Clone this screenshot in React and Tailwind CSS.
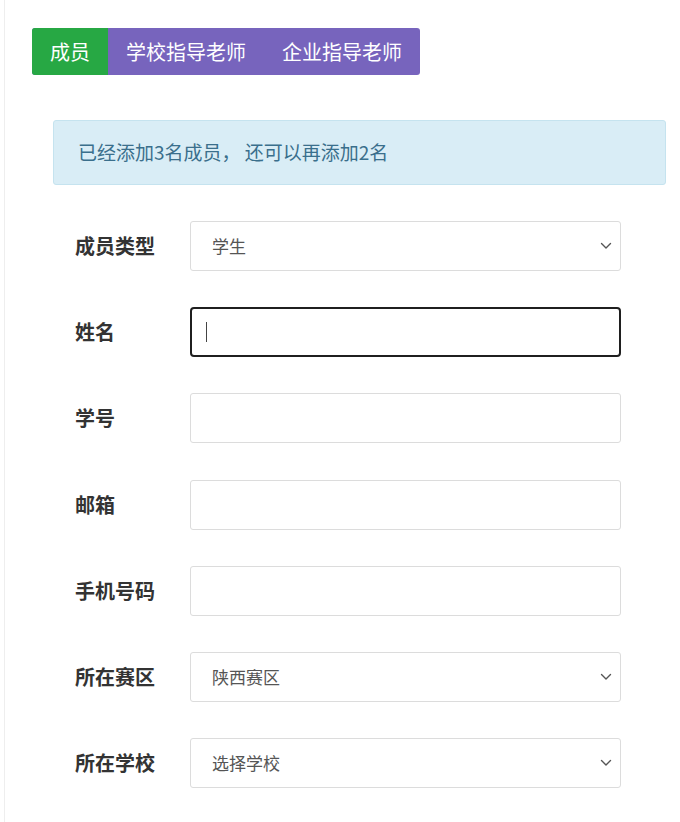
import React from 'react';

const tabs = [
  { label: '成员', active: true },
  { label: '学校指导老师' },
  { label: '企业指导老师' },
];

const rows = [
  { label: '成员类型', type: 'select', value: '学生' },
  { label: '姓名', type: 'input', focus: true },
  { label: '学号', type: 'input' },
  { label: '邮箱', type: 'input' },
  { label: '手机号码', type: 'input' },
  { label: '所在赛区', type: 'select', value: '陕西赛区' },
  { label: '所在学校', type: 'select', value: '选择学校' },
];

const Chevron = () => (
  <svg width="12" height="8" viewBox="0 0 12 8" fill="none" className="text-[#555]">
    <path d="M1.5 1.5L6 6l4.5-4.5" stroke="currentColor" strokeWidth="1.4" strokeLinecap="round" strokeLinejoin="round" />
  </svg>
);

const Field = ({ row }) => {
  if (row.type === 'select') {
    return (
      <div className="w-[431px] h-[50px] border border-[#dcdcdc] rounded-[3px] flex items-center justify-between pl-[21px] pr-[8px] text-[17px] text-[#555] bg-white">
        <span>{row.value}</span>
        <Chevron />
      </div>
    );
  }
  if (row.focus) {
    return (
      <div className="w-[431px] h-[50px] border-2 border-[#1f1f1f] rounded-[4px] flex items-center pl-[14px] bg-white">
        <span className="w-px h-[20px] bg-[#444]" />
      </div>
    );
  }
  return <div className="w-[431px] h-[50px] border border-[#dcdcdc] rounded-[3px] bg-white" />;
};

export default function App() {
  return (
    <div
      className="w-[680px] h-[822px] bg-white overflow-hidden"
      style={{ fontFamily: '"Noto Sans CJK SC", "Noto Sans", sans-serif' }}
    >
      <div className="ml-[4px] h-full border-l border-[#eeeeee] pt-[28px]">
        <div className="ml-[27px] flex w-fit rounded-[3px] overflow-hidden bg-[#7764bd] text-white text-[20px] h-[47px]">
          {tabs.map((t) => (
            <div
              key={t.label}
              className={
                t.active
                  ? 'bg-[#27a844] px-[18px] flex items-center'
                  : 'px-[18px] flex items-center'
              }
            >
              {t.label}
            </div>
          ))}
        </div>

        <div className="ml-[48px] mt-[45px] w-[613px] h-[65px] bg-[#d9edf6] border border-[#c5e3ef] rounded-[3px] flex items-center pl-[24px] text-[19px] text-[#3a6f8c]">
          已经添加3名成员， 还可以再添加2名
        </div>

        <div className="ml-[70px] mt-[36px] flex flex-col gap-[36.2px]">
          {rows.map((r) => (
            <div key={r.label} className="flex items-center">
              <div className="w-[115px] text-[20px] font-bold text-[#333]">{r.label}</div>
              <Field row={r} />
            </div>
          ))}
        </div>
      </div>
    </div>
  );
}
